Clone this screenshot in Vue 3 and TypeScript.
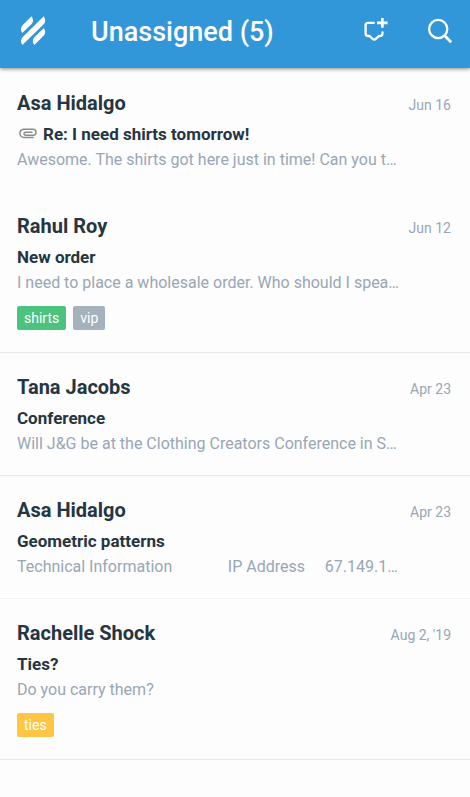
<script setup lang="ts">
interface Tag {
  label: string
  tone: 'green' | 'grey' | 'yellow'
}

interface Conversation {
  id: number
  customer: string
  date: string
  subject: string
  preview: string
  attachment?: boolean
  divider?: 'none' | 'light'
  tags?: Tag[]
}

const conversations: Conversation[] = [
  {
    id: 1,
    customer: 'Asa Hidalgo',
    date: 'Jun 16',
    subject: 'Re: I need shirts tomorrow!',
    preview: 'Awesome. The shirts got here just in time! Can you t…',
    attachment: true,
    divider: 'none',
  },
  {
    id: 2,
    customer: 'Rahul Roy',
    date: 'Jun 12',
    subject: 'New order',
    preview: 'I need to place a wholesale order. Who should I spea…',
    tags: [
      { label: 'shirts', tone: 'green' },
      { label: 'vip', tone: 'grey' },
    ],
  },
  {
    id: 3,
    customer: 'Tana Jacobs',
    date: 'Apr 23',
    subject: 'Conference',
    preview: 'Will J&G be at the Clothing Creators Conference in S…',
  },
  {
    id: 4,
    customer: 'Asa Hidalgo',
    date: 'Apr 23',
    subject: 'Geometric patterns',
    preview: 'Technical Information              IP Address     67.149.1…',
    divider: 'light',
  },
  {
    id: 5,
    customer: 'Rachelle Shock',
    date: "Aug 2, '19",
    subject: 'Ties?',
    preview: 'Do you carry them?',
    tags: [{ label: 'ties', tone: 'yellow' }],
  },
]
</script>

<template>
  <div class="screen">
    <header class="bar">
      <button class="icon-button logo" type="button" aria-label="Menu">
        <svg width="26" height="30" viewBox="0 0 26 30" fill="#fff">
          <path d="M2.2 17Q-.7 12.4 2.8 9L11.6 .3Q14.6 5 11.4 8.2Z" />
          <path d="M2.4 29Q-.7 24.4 2.8 20.9L23.8 .3Q26.8 5 23.4 8.4Z" />
          <path d="M14.2 29Q11.2 24.4 14.6 21L23.8 12Q26.8 16.6 23.4 20Z" />
        </svg>
      </button>
      <h1 class="title">Unassigned (5)</h1>
      <button class="icon-button compose" type="button" aria-label="New conversation">
        <svg width="26" height="26" viewBox="0 0 26 26" fill="none" stroke="#fff" stroke-width="2.3" stroke-linecap="round" stroke-linejoin="round">
          <path d="M10.8 4.9H5Q2.6 4.9 2.6 7.3V15.6Q2.6 18 5 18H6.6L9.6 20.9Q11.2 22.5 12.8 20.9L15.8 18H17.1Q19.5 18 19.5 15.6V14.4" />
          <path d="M19.4 -.2V9.8M14 4.9H24.6" stroke-width="2.6" stroke-linecap="butt" />
        </svg>
      </button>
      <button class="icon-button" type="button" aria-label="Search">
        <svg width="26" height="26" viewBox="0 0 26 26" fill="none" stroke="#fff" stroke-width="2.3">
          <circle cx="11.2" cy="11" r="9.1" />
          <path d="M17.5 17.5 24.2 24.3" stroke-width="2.8" />
        </svg>
      </button>
    </header>

    <ul class="list">
      <li v-for="item in conversations" :key="item.id" class="item" :class="item.divider">
        <a class="row" href="#">
          <span class="top">
            <span class="customer">{{ item.customer }}</span>
            <time class="date">{{ item.date }}</time>
          </span>
          <span class="subject">
            <svg v-if="item.attachment" class="clip" width="18" height="12" viewBox="0 0 18 12" fill="none" stroke="#8c8c8c" stroke-width="1.5" stroke-linecap="round">
              <path d="M14.2 9.4H5A4.1 4.1 0 0 1 5 1.2H14A3 3 0 0 1 14 7.2H6.5A1.5 1.5 0 0 1 6.5 4.2H13" />
            </svg>
            {{ item.subject }}
          </span>
          <span class="preview">{{ item.preview }}</span>
          <span v-if="item.tags" class="tags">
            <span v-for="tag in item.tags" :key="tag.label" class="tag" :class="tag.tone">{{ tag.label }}</span>
          </span>
        </a>
      </li>
    </ul>
  </div>
</template>

<style>
body {
  background: #fdfdfd;
}
</style>

<style scoped>
.screen {
  font-family: Roboto, "Liberation Sans", sans-serif;
  color: #253642;
}

.bar {
  position: relative;
  display: flex;
  align-items: center;
  box-sizing: border-box;
  height: 68px;
  padding: 0 17px 6px 20px;
  background: #3197d9;
  box-shadow: 0 1px 4px rgba(0, 0, 0, 0.45);
}

.icon-button {
  display: flex;
  padding: 0;
  border: 0;
  background: none;
  cursor: pointer;
}

.title {
  flex: 1;
  margin: 0 0 0 45px;
  padding-top: 2px;
  color: #fff;
  font-size: 27px;
  font-weight: 500;
  line-height: 32px;
}

.compose {
  margin-right: 38px;
}

.list {
  margin: 0;
  padding: 1px 0 0;
  list-style: none;
}

.item {
  border-bottom: 1px solid #e6e8ea;
}

.item.light {
  border-color: #f1f1f2;
}

.item.none {
  border-color: transparent;
}

.row {
  display: flex;
  flex-direction: column;
  padding: 22px 19px 19px 17px;
  color: inherit;
  text-decoration: none;
}

.top {
  display: flex;
  justify-content: space-between;
  align-items: baseline;
  height: 24px;
}

.customer {
  font-size: 20px;
  font-weight: 700;
  line-height: 24px;
}

.date {
  color: #98a6b5;
  font-size: 14px;
  line-height: 24px;
}

.subject {
  display: flex;
  align-items: center;
  gap: 6px;
  margin-top: 7px;
  font-size: 17px;
  font-weight: 700;
  line-height: 24px;
}

.clip {
  margin-left: 2px;
}

.preview {
  margin-top: 2px;
  overflow: hidden;
  color: #98a6b5;
  font-size: 16px;
  line-height: 24px;
  text-overflow: ellipsis;
  white-space: pre;
}

.tags {
  display: flex;
  gap: 7px;
  margin: 11px 0 3px;
}

.tag {
  padding: 0 7px;
  border-radius: 2px;
  color: #fff;
  font-size: 14px;
  line-height: 24px;
}

.green {
  background: #4bc27d;
}

.grey {
  background: #a5b2bd;
}

.yellow {
  background: #ffc646;
}
</style>
